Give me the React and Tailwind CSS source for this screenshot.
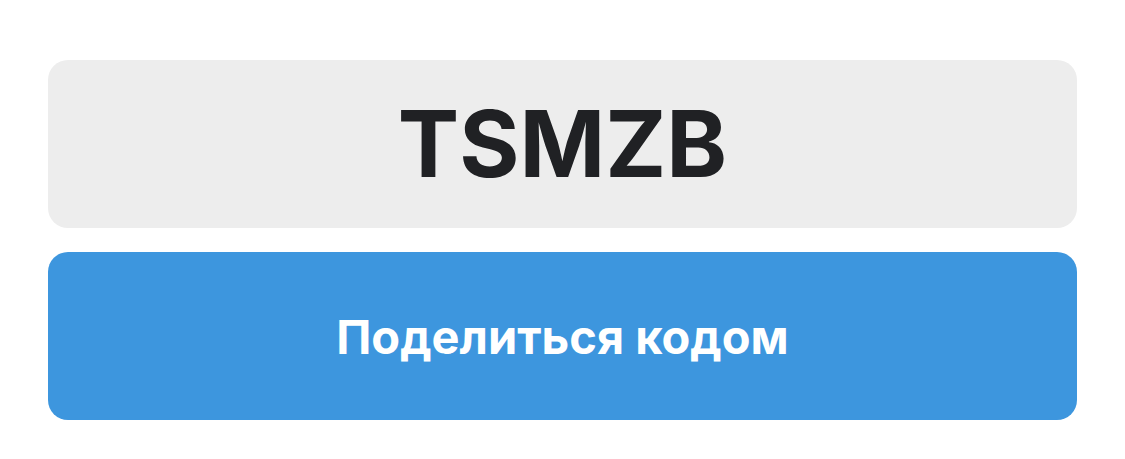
export default function App() {
  return (
    <div className="flex h-[459px] w-[1125px] flex-col gap-6 bg-white px-12 pt-[60px]" style={{ fontFamily: 'Inter, "Noto Sans", sans-serif' }}>
      <div className="flex h-[168px] items-center justify-center rounded-[20px] bg-[#ededed]">
        <span className="text-[92px] font-bold leading-none text-[#202124]">TSMZB</span>
      </div>
      <button className="flex h-[168px] items-center justify-center rounded-[20px] bg-[#3d96de]">
        <span className="text-[47px] font-bold leading-none text-white">Поделиться кодом</span>
      </button>
    </div>
  );
}
